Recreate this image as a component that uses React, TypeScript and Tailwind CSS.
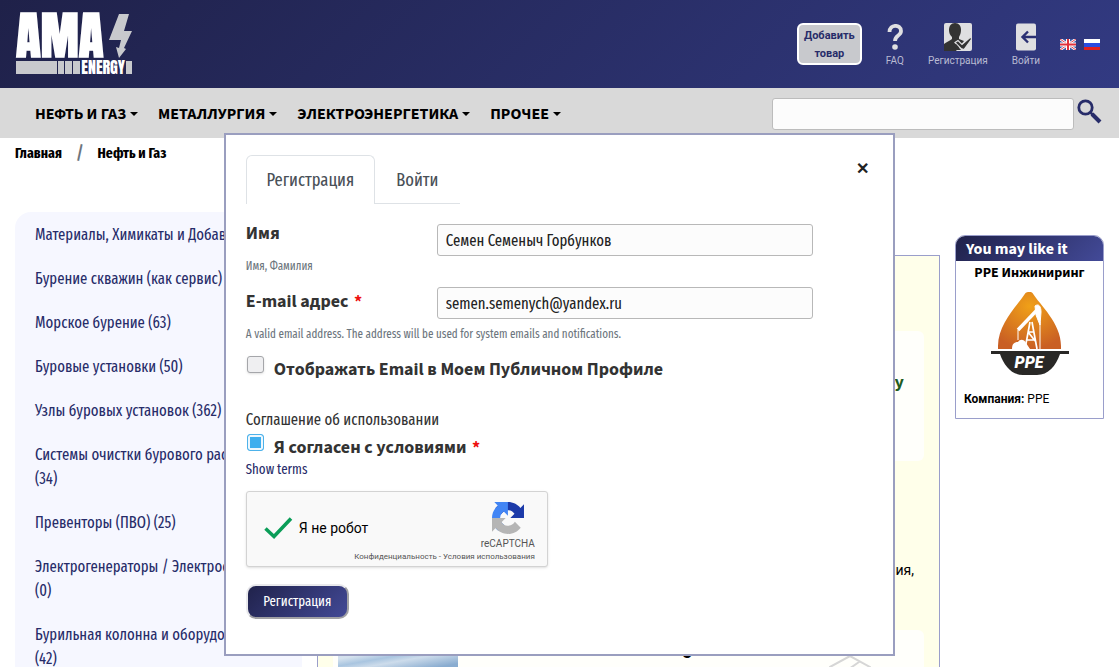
import { useState, type ReactNode } from "react";

const navItems = ["НЕФТЬ И ГАЗ", "МЕТАЛЛУРГИЯ", "ЭЛЕКТРОЭНЕРГЕТИКА", "ПРОЧЕЕ"];

const categories = [
  { name: "Материалы, Химикаты и Добавки", count: 129 },
  { name: "Бурение скважин (как сервис)", count: 88 },
  { name: "Морское бурение", count: 63 },
  { name: "Буровые установки", count: 50 },
  { name: "Узлы буровых установок", count: 362 },
  { name: "Системы очистки бурового раствора", count: 34 },
  { name: "Превенторы (ПВО)", count: 25 },
  { name: "Электрогенераторы / Электростанции", count: 0 },
  { name: "Бурильная колонна и оборудование", count: 42 },
];

function Logo() {
  return (
    <a href="#" aria-label="AMA Energy" className="block w-[116px] font-['Anton','DejaVu_Sans_Mono',monospace] text-white">
      <span className="flex h-11 items-center justify-between">
        <span className="text-[51px] leading-[44px] font-bold">AMA</span>
        <svg viewBox="0 0 23 44" className="h-11 w-[23px] shrink-0" fill="#c8c9cd">
          <path d="M10 0h10l-5 17h8l-8 17 2 1-7 9-3-11 3 1 2-8H0z" />
        </svg>
      </span>
      <span className="mt-[3px] flex h-[13px] items-stretch gap-px">
        <span className="flex-1 bg-[#c8c9cd]" />
        <span className="w-1.5 bg-[#c8c9cd]" />
        <span className="w-[7px] bg-[#c8c9cd]" />
        <span className="w-[7px] bg-[#c8c9cd]" />
        <span className="text-base leading-[13px]">ENERGY</span>
        <span className="w-1.5 bg-[#c8c9cd]" />
      </span>
    </a>
  );
}

function HeaderLink({ label, children }: { label: string; children: ReactNode }) {
  return (
    <a href="#" className="flex flex-col items-center gap-1 text-[10px] leading-3 text-[#b9bbd2]">
      <span className="flex h-7 items-center">{children}</span>
      {label}
    </a>
  );
}

function UserIcon() {
  return (
    <svg viewBox="0 0 28 28" className="size-7">
      <rect width="28" height="28" rx="2" fill="#dfdfe1" />
      <path d="M11 0c4 0 6 3 6 7 0 3-1 5-2 7v2l5 2-8 10H0V21c2-2 6-3 8-5v-2C6 12 5 10 5 7c0-4 2-7 6-7z" fill="#333" />
      <path d="M11 19.500l3-2 4 4 8-7 2 1-8 11-3-1z" fill="#333" stroke="#dfdfe1" strokeWidth="1.200" />
      <path d="M13 27l-3-4 2-2 5 6z" fill="#333" />
    </svg>
  );
}

function LoginIcon() {
  return (
    <svg viewBox="0 0 20 28" className="h-7 w-5">
      <rect width="20" height="27" y="0.500" rx="2" fill="#dfdfe1" />
      <path d="M20 14H7M12 8.500L6.500 14l5.500 5.500" fill="none" stroke="#2b3073" strokeWidth="2.400" />
    </svg>
  );
}

function FlagGb() {
  return (
    <svg viewBox="0 0 16 11" className="h-[11px] w-4">
      <rect width="16" height="11" fill="#3c5aa8" />
      <path d="M0 0l16 11M16 0L0 11" stroke="#fff" strokeWidth="2.600" />
      <path d="M0 0l16 11M16 0L0 11" stroke="#e0424c" strokeWidth="1" />
      <path d="M8 0v11M0 5.500h16" stroke="#fff" strokeWidth="4" />
      <path d="M8 0v11M0 5.500h16" stroke="#e0323c" strokeWidth="2" />
    </svg>
  );
}

function FlagRu() {
  return (
    <svg viewBox="0 0 16 11" className="h-[11px] w-4">
      <rect width="16" height="4" fill="#fff" />
      <rect y="4" width="16" height="4" fill="#2a4be0" />
      <rect y="8" width="16" height="3" fill="#e02020" />
    </svg>
  );
}

function Header() {
  return (
    <header className="flex h-22 justify-between bg-[linear-gradient(135deg,#1f2149,#323a82)] pl-4 pr-[19px] font-['Roboto',sans-serif]">
      <div className="pt-3.5">
        <Logo />
      </div>
      <div className="flex items-start gap-6 pt-[23px]">
        <button className="h-[42px] w-[65px] rounded-md border-2 border-white bg-[#c8c9cd] pt-px text-center text-[11px] leading-[18px] font-bold text-[#272c69]">
          Добавить товар
        </button>
        <HeaderLink label="FAQ">
          <svg viewBox="0 0 16 26" className="h-[26px] w-4">
            <path d="M2.500 8c0-8 11.500-8 11.500-1 0 5-6 4-6 10" fill="none" stroke="#dfdfe1" strokeWidth="3.800" />
            <circle cx="8" cy="23" r="2.800" fill="#dfdfe1" />
          </svg>
        </HeaderLink>
        <HeaderLink label="Регистрация">
          <UserIcon />
        </HeaderLink>
        <HeaderLink label="Войти">
          <LoginIcon />
        </HeaderLink>
        <div className="-ml-1 flex gap-2 pt-4">
          <a href="#" aria-label="English"><FlagGb /></a>
          <a href="#" aria-label="Русский"><FlagRu /></a>
        </div>
      </div>
    </header>
  );
}

function NavBar() {
  return (
    <nav className="flex h-[50px] items-center justify-between bg-[#d9d9d9] pt-0.5 pl-[35px] pr-[17px] font-['Source_Sans_Pro','Source_Sans_3','Noto_Sans',sans-serif]">
      <ul className="flex gap-5 text-base leading-5 font-bold text-black">
        {navItems.map((item) => (
          <li key={item}>
            <a href="#" className="flex items-center gap-1 whitespace-nowrap">
              {item}
              <span className="border-x-4 border-t-4 border-x-transparent border-t-black" />
            </a>
          </li>
        ))}
      </ul>
      <form className="flex items-center gap-[3px]">
        <input type="search" aria-label="Поиск" className="h-8 w-[302px] rounded-[3px] border border-[#bcbcbc] bg-[#fcfcfc] px-2 text-sm" />
        <button type="button" aria-label="Найти" className="pb-1.5">
          <svg viewBox="0 0 25 25" className="size-[25px]" fill="none" stroke="#272c69">
            <circle cx="8.500" cy="8.500" r="6.700" strokeWidth="2.800" />
            <path d="M13.500 13.500l2.500 2.500" strokeWidth="2.500" />
            <path d="M15 15l8 8" strokeWidth="4" />
          </svg>
        </button>
      </form>
    </nav>
  );
}

function Sidebar() {
  return (
    <aside className="mt-[49px] w-[287px] shrink-0 rounded-2xl bg-[#f6f7ff] px-5 pt-[11px] pb-5">
      <ul className="flex flex-col gap-5 text-base leading-6 text-[#272c69]">
        {categories.map(({ name, count }) => (
          <li key={name}>
            <a href="#">{name} ({count})</a>
          </li>
        ))}
      </ul>
    </aside>
  );
}

function Products() {
  return (
    <main className="mt-[92px] min-w-0 flex-1 border border-[#9a9ecb] bg-[#ffffea] px-[15px] pt-[75px]">
      <div className="h-[130px] rounded-md bg-[#fffffb] px-5 pt-10 text-right font-['Source_Sans_Pro','Source_Sans_3','Noto_Sans',sans-serif] text-lg leading-6 font-bold text-[#1f5c1f]">
        Подать заявку
      </div>
      <p className="mt-[97px] px-2.5 text-right font-['Roboto',sans-serif] text-sm leading-6 text-black">Нефтегазовая компания,</p>
      <div className="mt-12 flex h-[110px] justify-between rounded-md bg-[#fffffb] px-[5px] pt-2">
        <div className="h-24 w-[120px] rounded-lg bg-[linear-gradient(170deg,#d5e2ee_18%,#a9c5e0_24%,#cddceb_29%,#89acd0_40%)]" />
        <span className="font-['Roboto',sans-serif] text-lg leading-5 font-bold text-black">Asia Drilling</span>
        <svg viewBox="0 0 42 50" className="mt-[17px] mr-12 h-[50px] w-[42px]" fill="none" stroke="#d6d6d6" strokeWidth="2">
          <path d="M1 12L21 1l20 11v26L21 49 1 38zM20 14l10-7M20 14l12 7" />
        </svg>
      </div>
    </main>
  );
}

function PpeLogo() {
  return (
    <svg viewBox="0 0 78 83" className="mx-auto mt-[7px] h-[83px] w-[78px]">
      <defs>
        <radialGradient id="drop" cx="50%" cy="25%" r="75%">
          <stop offset="0" stopColor="#f0a018" />
          <stop offset="1" stopColor="#c95f24" />
        </radialGradient>
      </defs>
      <path d="M34.500 1c3-1.500 5-1.500 7 0C49 13 70 31 70 54v3H7v-3C7 31 27 13 34.500 1z" fill="url(#drop)" />
      <g stroke="#fff" fill="none">
        <path d="M27 38l19-20" strokeWidth="3.500" />
        <path d="M44 14c4-3 6 1 6 6l-1 13-4-10z" fill="#fff" strokeWidth="1" />
        <path d="M39 30l-5 27M41 30l5 27M37 40h6M36 48h8M37 40l8 10" strokeWidth="1.700" />
        <path d="M49 30v27M27 38v10" strokeWidth="1" />
      </g>
      <path d="M21 57c0-5 2-7 6-7 2-3 6-3 8 1l4 6z" fill="#fff" />
      <path d="M0 59h78v3h-9C65 74 57 83 46 83H32C21 83 13 74 9 62H0z" fill="#292826" />
      <text x="38" y="76" textAnchor="middle" fill="#fff" fontFamily="Roboto, sans-serif" fontWeight="900" fontStyle="italic" fontSize="16">PPE</text>
    </svg>
  );
}

function Promo() {
  return (
    <section className="mt-[72px] w-[149px] shrink-0 self-start overflow-hidden rounded-t-[10px] border border-[#9a9ecb] bg-white pb-[7px]">
      <h2 className="bg-[linear-gradient(135deg,#1f2149,#434a98)] px-2.5 pt-px font-['Source_Sans_Pro','Source_Sans_3','Noto_Sans',sans-serif] text-base leading-6 font-bold text-white">
        You may like it
      </h2>
      <h3 className="text-center font-['Source_Sans_Pro','Source_Sans_3','Noto_Sans',sans-serif] text-sm leading-6 font-bold text-black">
        PPE Инжиниринг
      </h3>
      <PpeLogo />
      <p className="mt-3 px-2 font-['Roboto',sans-serif] text-xs leading-6 text-black">
        <b>Компания:</b> PPE
      </p>
    </section>
  );
}

function Required() {
  return <span className="ml-0.5 text-[#e11]"> *</span>;
}

interface FieldProps {
  id: string;
  label: string;
  hint: string;
  type?: string;
  value: string;
  required?: boolean;
}

function Field({ id, label, hint, type = "text", value, required }: FieldProps) {
  return (
    <div>
      <div className={required ? "flex h-[37px] items-start" : "flex h-8 items-start"}>
        <label
          htmlFor={id}
          className={`w-[191px] shrink-0 font-['Source_Sans_Pro','Source_Sans_3','Noto_Sans',sans-serif] text-lg leading-5 font-bold text-[#333] ${required ? "pt-[5px]" : ""}`}
        >
          {label}
          {required && <Required />}
        </label>
        <input
          id={id}
          type={type}
          defaultValue={value}
          className="h-8 w-3/5 rounded-[3px] border border-[#b8b8b8] bg-[#fcfcfc] px-2 text-base text-[#222]"
        />
      </div>
      <p className="py-0.5 text-xs leading-4 text-[#6c757d]">{hint}</p>
    </div>
  );
}

interface CheckProps {
  id: string;
  label: string;
  checked?: boolean;
  required?: boolean;
}

function Check({ id, label, checked = false, required }: CheckProps) {
  const [on, setOn] = useState(checked);

  return (
    <div className="flex items-start gap-2.5 pl-px">
      <input
        id={id}
        type="checkbox"
        checked={on}
        onChange={() => setOn(!on)}
        className="size-[17px] shrink-0 appearance-none rounded-[3px] border border-[#a5a6aa] bg-[#efeff1] shadow-sm checked:border-[#4db2ea] checked:bg-[#3eaeee] checked:shadow-[inset_0_0_0_2px_#eef7fd]"
      />
      <label htmlFor={id} className="pt-1 font-['Source_Sans_Pro','Source_Sans_3','Noto_Sans',sans-serif] text-lg leading-5 font-bold text-[#333]">
        {label}
        {required && <Required />}
      </label>
    </div>
  );
}

function Captcha() {
  return (
    <div className="flex h-[76px] w-[302px] flex-col rounded-[3px] border border-[#d3d3d3] bg-[#f9f9f9] pl-[17px] pr-3 font-['Roboto',sans-serif] shadow-sm">
      <div className="flex h-[59px] items-start justify-between pt-2.5">
        <div className="flex items-center gap-1.5 pt-[15px] text-sm text-black">
          <svg viewBox="0 0 29 22" className="h-[22px] w-[29px]" fill="none" stroke="#0a9d58" strokeWidth="3.500">
            <path d="M1.500 11.500l8.500 8L27 1.500" />
          </svg>
          Я не робот
        </div>
        <div className="flex flex-col items-center gap-1 text-[10px] leading-3 text-[#555]">
          <svg viewBox="0 0 64 64" className="size-8">
            <path d="M64 31.955a33.500 33.500 0 0 0-.03-1.370V4.687l-7.160 7.160C50.950 4.674 42.033.093 32.050.093c-10.400 0-19.630 4.960-25.500 12.640l11.736 11.860a15.500 15.500 0 0 1 4.754-5.334c2.050-1.600 4.952-2.906 8.968-2.906.485 0 .860.057 1.135.163 4.976.393 9.288 3.140 11.828 7.124l-8.307 8.307 27.336-.03" fill="#1c3aa9" />
            <path d="M31.862.094a33.500 33.500 0 0 0-1.370.030H4.594l7.160 7.160C4.580 13.144 0 22.060 0 32.043c0 10.400 4.960 19.630 12.640 25.500l11.860-11.736a15.500 15.500 0 0 1-5.334-4.754c-1.600-2.050-2.906-4.952-2.906-8.968 0-.485.057-.860.163-1.135.393-4.976 3.140-9.288 7.124-11.828l8.307 8.307.008-27.335" fill="#4285f4" />
            <path d="M.001 32.045a33.500 33.500 0 0 0 .030 1.370v25.898l7.160-7.160c5.860 7.173 14.774 11.754 24.760 11.754 10.400 0 19.630-4.960 25.500-12.640l-11.736-11.860a15.500 15.500 0 0 1-4.754 5.334c-2.050 1.600-4.952 2.906-8.968 2.906-.485 0-.860-.057-1.135-.163-4.976-.393-9.288-3.140-11.828-7.124l8.307-8.307-27.336-.008" fill="#b5b5b5" />
          </svg>
          reCAPTCHA
        </div>
      </div>
      <p className="text-right text-[8px] leading-3 text-[#555]">
        <a href="#">Конфиденциальность</a> - <a href="#">Условия использования</a>
      </p>
    </div>
  );
}

function RegisterDialog() {
  return (
    <div role="dialog" aria-label="Регистрация" className="absolute top-[133px] left-1/5 w-3/5 border-2 border-[#9a9ebf] bg-white px-5 pt-5 pb-[35px]">
      <div className="flex items-start justify-between">
        <div role="tablist" className="flex text-lg leading-6 text-[#495057]">
          <button role="tab" aria-selected="true" className="h-[49px] w-[129px] rounded-t-md border border-b-0 border-[#dee2e6]">
            Регистрация
          </button>
          <button role="tab" aria-selected="false" className="h-[49px] w-[85px] border-b border-[#dee2e6] pt-px">
            Войти
          </button>
        </div>
        <button aria-label="Закрыть" className="px-1 pt-1 text-base leading-5 font-bold text-[#222]">
          ✕
        </button>
      </div>

      <form className="pt-5">
        <div className="flex flex-col gap-[11px]">
          <Field id="name" label="Имя" hint="Имя, Фамилия" value="Семен Семеныч Горбунков" />
          <Field
            id="email"
            type="email"
            label="E-mail адрес"
            hint="A valid email address. The address will be used for system emails and notifications."
            value="semen.semenych@yandex.ru"
            required
          />
        </div>
        <div className="pt-3">
          <Check id="show-email" label="Отображать Email в Моем Публичном Профиле" />
        </div>
        <p className="pt-7 text-base leading-6 text-[#333]">Соглашение об использовании</p>
        <div className="pt-0.5">
          <Check id="terms" label="Я согласен с условиями" checked required />
        </div>
        <a href="#" className="mt-0.5 block w-fit text-sm leading-5 text-[#272c69]">Show terms</a>
        <div className="pt-[11px]">
          <Captcha />
        </div>
        <button
          type="button"
          className="mt-[17px] h-[35px] w-[103px] rounded-[10px] border-2 border-t-[#e9e9ec] border-r-[#a0a0a4] border-b-[#a0a0a4] border-l-[#e9e9ec] bg-[linear-gradient(135deg,#1f2149,#434a98)] bg-origin-border text-sm text-white"
        >
          Регистрация
        </button>
      </form>
    </div>
  );
}

export default function App() {
  return (
    <div className="relative h-screen overflow-hidden bg-white font-['Fira_Sans_Extra_Condensed','Fira_Sans_Condensed','Roboto',sans-serif]">
      <Header />
      <NavBar />
      <ol className="flex gap-3.5 px-[15px] pt-[5px] text-[15px] leading-5 font-bold text-black">
        <li><a href="#">Главная</a></li>
        <li className="text-lg leading-5 font-medium text-[#6c757d]">/</li>
        <li>Нефть и Газ</li>
      </ol>
      <div className="flex items-start gap-[15px] px-[15px]">
        <Sidebar />
        <Products />
        <Promo />
      </div>
      <RegisterDialog />
    </div>
  );
}
